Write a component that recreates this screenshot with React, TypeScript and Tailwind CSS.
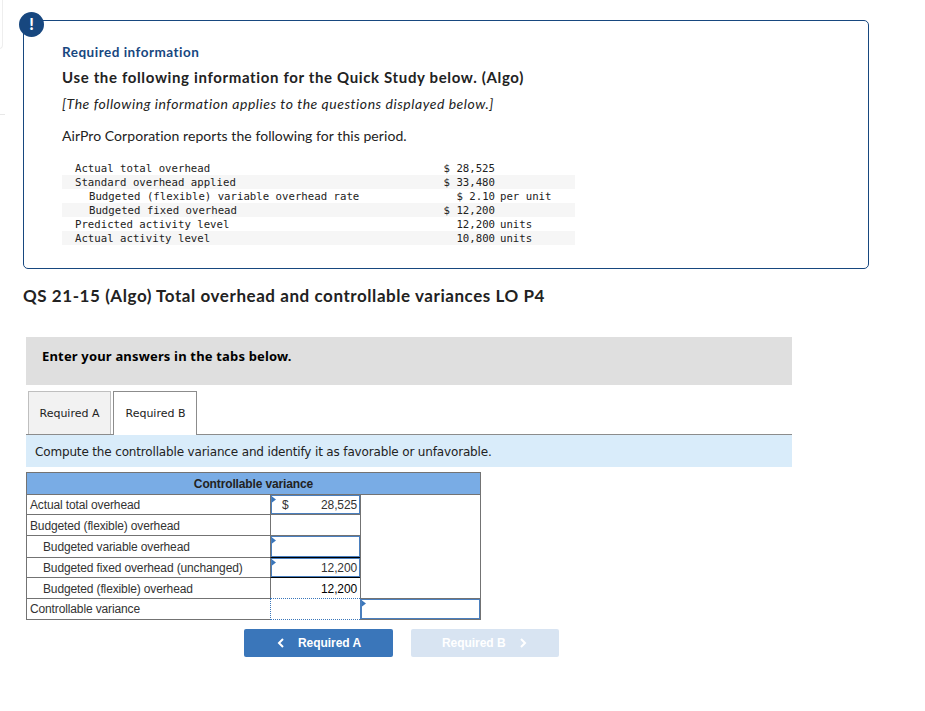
import React from "react";

const overhead = [
  { label: "Actual total overhead", value: "$ 28,525", unit: "" },
  { label: "Standard overhead applied", value: "$ 33,480", unit: "" },
  { label: "Budgeted (flexible) variable overhead rate", value: "$ 2.10", unit: "per unit", indent: true },
  { label: "Budgeted fixed overhead", value: "$ 12,200", unit: "", indent: true },
  { label: "Predicted activity level", value: "12,200", unit: "units" },
  { label: "Actual activity level", value: "10,800", unit: "units" },
];

function Marker() {
  return (
    <svg className="absolute left-0 top-0" width="5" height="7" viewBox="0 0 5 7">
      <path d="M0 0.5L4 3.5L0 6.5Z" fill="#3a76ba" />
    </svg>
  );
}

function Field({ children }: { children?: React.ReactNode }) {
  return (
    <div className="relative flex h-full items-center justify-between border border-[#4a7fbe] pl-[10px] pr-[2px]">
      <Marker />
      {children}
    </div>
  );
}

function Label({ children, indent, low }: { children: string; indent?: boolean; low?: boolean }) {
  return (
    <div className={"flex items-center border-l border-t border-[#737373] " + (indent ? "pl-4 " : "pl-[3px] ") + (low ? "pt-[2px]" : "")}>
      <span>{children}</span>
    </div>
  );
}

function RequiredInfo() {
  return (
    <section className="relative ml-[23px] h-[249px] w-[846px] rounded-[5px] border border-[#17477f] pl-[38px] pt-[20px] font-['Lato',sans-serif] text-[#222]">
      <div className="absolute -left-[5px] -top-[9px] flex h-[25px] w-[25px] items-center justify-center rounded-full bg-[#17477f] pb-[2px] text-[16px] font-black leading-none text-white">!</div>
      <h2 className="h-[23px] text-[13.5px] font-bold leading-[22px] tracking-[0.5px] text-[#17477f]">Required information</h2>
      <h1 className="h-[27px] text-[15px] font-bold leading-[26px] tracking-[0.645px]">Use the following information for the Quick Study below. (Algo)</h1>
      <p className="h-[32px] text-[14px] italic leading-[25px] tracking-[0.53px]">[The following information applies to the questions displayed below.]</p>
      <p className="h-[38px] text-[14px] leading-[25px] tracking-[0.06px]">AirPro Corporation reports the following for this period.</p>
      <div className="w-[513px] font-['DejaVu_Sans_Mono',monospace] text-[10.7px] leading-[16px]">
        {overhead.map((r, i) => (
          <div key={r.label} className={"flex h-[14px] whitespace-pre " + (i % 2 ? "bg-[#f6f6f6]" : "")}>
            <span className={"w-[365px] " + (r.indent ? "pl-[27px]" : "pl-[13px]")}>{r.label}</span>
            <span className="w-[68px] text-right">{r.value}</span>
            <span className="pl-[5px]">{r.unit}</span>
          </div>
        ))}
      </div>
    </section>
  );
}

function VarianceTable() {
  return (
    <div className="mt-[5px] grid w-[455px] grid-cols-[244px_90px_121px] grid-rows-[22px_20px_21px_22px_20px_21px_22px] font-['Liberation_Sans',Arial,sans-serif] text-[12px] tracking-[-0.13px] text-[#333]">
      <div className="col-span-3 flex items-center justify-center border border-b-0 border-[#737373] bg-[#79ace5] font-bold text-[#222]">Controllable variance</div>
      <Label>Actual total overhead</Label>
      <div className="border-l border-t border-[#737373]"><Field><span>$</span><span>28,525</span></Field></div>
      <div className="row-span-5 border border-b-0 border-[#737373]" />
      <Label low>Budgeted (flexible) overhead</Label>
      <div className="border-l border-t border-[#737373]" />
      <Label indent>Budgeted variable overhead</Label>
      <div className="border-l border-t border-[#737373]"><Field /></div>
      <Label indent>Budgeted fixed overhead (unchanged)</Label>
      <div className="border-l border-t border-l-[#737373] border-t-black"><Field><span /><span>12,200</span></Field></div>
      <Label indent low>Budgeted (flexible) overhead</Label>
      <div className="flex items-center justify-end border-l border-t border-l-[#737373] border-t-black pr-[3px] pt-[2px] text-black">12,200</div>
      <div className="flex items-center border border-r-0 border-[#737373] pl-[3px]">Controllable variance</div>
      <div className="border border-r-0 border-dotted border-[#3a76ba]" />
      <div className="border border-[#737373] border-l-[#4a7fbe]"><Field /></div>
    </div>
  );
}

export default function App() {
  return (
    <main className="relative h-[711px] w-[925px] overflow-hidden whitespace-nowrap bg-white pt-[20px]">
      <div className="absolute -left-2 -top-2 h-[57px] w-[11px] rounded-br-[4px] border-b border-r border-[#eeeeee]" />
      <div className="absolute left-0 top-[114px] h-px w-[5px] bg-[#e8e8e8]" />
      <RequiredInfo />
      <h2 className="ml-[23px] mt-[15px] h-[53px] font-['Lato',sans-serif] text-[17px] font-bold leading-[24px] tracking-[0.56px] text-[#222]">QS 21-15 (Algo) Total overhead and controllable variances LO P4</h2>
      <div className="ml-[26px] w-[766px] font-['DejaVu_Sans',Verdana,sans-serif]">
        <div className="h-[48px] bg-[#dfdfdf] pl-4 pt-[9px] font-['Noto_Sans',sans-serif] text-[13px] font-bold leading-[20px] tracking-[0.17px] text-black">Enter your answers in the tabs below.</div>
        <div className="mt-[6px] flex h-[44px] border-b border-[#8c8c8c] pl-[2px] text-[11px] text-[#222]">
          <div className="flex h-[43px] w-[83px] items-center justify-center border border-b-0 border-[#bfbfbf] bg-[#f2f2f2] pt-[2px]">Required A</div>
          <div className="ml-[2px] flex h-[44px] w-[84px] items-center justify-center border border-b-0 border-[#8c8c8c] bg-white pl-px pt-[2px]">Required B</div>
        </div>
        <div className="h-[32px] bg-[#d9ecfa] pl-[9px] text-[12px] leading-[35px] tracking-[-0.155px] text-[#222]">Compute the controllable variance and identify it as favorable or unfavorable.</div>
        <VarianceTable />
        <div className="ml-[218px] mt-[9px] flex gap-[18px] font-['Liberation_Sans',Arial,sans-serif] text-[12px] font-bold tracking-[-0.05px] text-white">
          <button className="flex h-[28px] w-[149px] items-center rounded-[2px] bg-[#3a76ba] pl-[33px]">
            <svg width="7" height="10" viewBox="0 0 7 10" fill="none" stroke="white" strokeWidth="2"><path d="M6 1L2 5L6 9" /></svg>
            <span className="ml-[14px]">Required A</span>
          </button>
          <button className="flex h-[28px] w-[148px] items-center rounded-[2px] bg-[#d8e4f2] pl-[31px]">
            <span>Required B</span>
            <svg className="ml-[14px]" width="7" height="10" viewBox="0 0 7 10" fill="none" stroke="white" strokeWidth="2"><path d="M1 1L5 5L1 9" /></svg>
          </button>
        </div>
      </div>
    </main>
  );
}
